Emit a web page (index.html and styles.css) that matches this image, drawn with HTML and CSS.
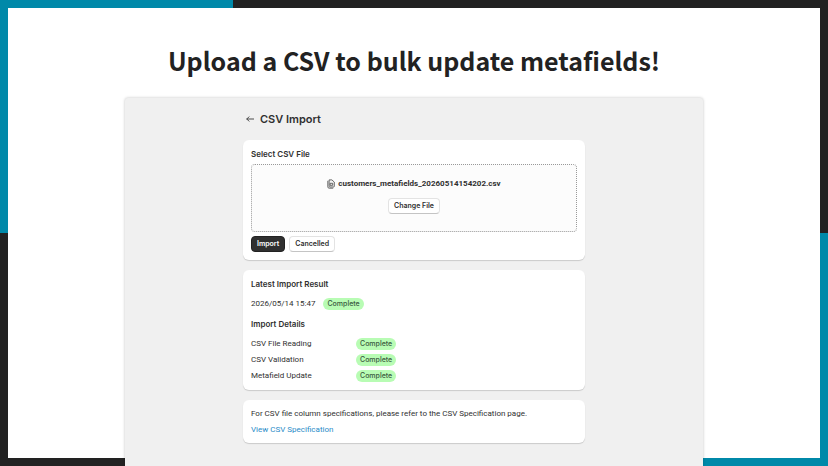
FILE: index.html
```html
<!DOCTYPE html>
<html lang="en">

<head>
    <meta charset="UTF-8">
    <meta name="viewport" content="width=device-width, initial-scale=1">
    <title>CSV Import</title>
    <link rel="stylesheet" href="styles.css">
</head>

<body>
    <div class="frame">
        <main class="sheet">
            <h1 class="headline">Upload a CSV to bulk update metafields!</h1>

            <div class="panel">
                <div class="content">
                    <header class="page-header">
                        <a href="#" class="back" aria-label="Back">
                            <svg viewBox="0 0 10 10" width="10" height="10">
                                <path d="M8.6 5H1.8M4 2.8L1.8 5 4 7.2" fill="none" stroke="#4a4a4a" stroke-width="1" stroke-linecap="round" stroke-linejoin="round" />
                            </svg>
                        </a>
                        <h2>CSV Import</h2>
                    </header>

                    <section class="card">
                        <h3>Select CSV File</h3>
                        <div class="dropzone">
                            <div class="file">
                                <svg viewBox="0 0 8 10" width="8" height="10">
                                    <path d="M2.1.9h2.8l2.4 2.2v4.2q0 .7-.7.7H2.8q-.7 0-.7-.7z" fill="#f4f4f4" stroke="#454545" stroke-width=".8" stroke-linejoin="round" />
                                    <path d="M.8 2.2v5.6q0 1.4 1.4 1.4h3.6M3.5 4.3h2.2v2H3.5z" fill="none" stroke="#454545" stroke-width=".8" stroke-linecap="round" />
                                </svg>
                                <span>customers_metafields_20260514154202.csv</span>
                            </div>
                            <button type="button" class="btn">Change File</button>
                        </div>
                        <div class="actions">
                            <button type="button" class="btn primary">Import</button>
                            <button type="button" class="btn">Cancelled</button>
                        </div>
                    </section>

                    <section class="card result">
                        <h3>Latest Import Result</h3>
                        <p class="latest">
                            <span>2026/05/14 15:47</span>
                            <span class="badge">Complete</span>
                        </p>
                        <h3>Import Details</h3>
                        <table class="details">
                            <tr>
                                <th scope="row">CSV File Reading</th>
                                <td><span class="badge">Complete</span></td>
                            </tr>
                            <tr>
                                <th scope="row">CSV Validation</th>
                                <td><span class="badge">Complete</span></td>
                            </tr>
                            <tr>
                                <th scope="row">Metafield Update</th>
                                <td><span class="badge">Complete</span></td>
                            </tr>
                        </table>
                    </section>

                    <section class="card spec">
                        <p>For CSV file column specifications, please refer to the CSV Specification page.</p>
                        <a href="#">View CSV Specification</a>
                    </section>
                </div>
            </div>
        </main>
    </div>
</body>

</html>
```
FILE: styles.css
```css
* {
    box-sizing: border-box;
}

body,
h1,
h2,
h3,
p {
    margin: 0;
}

body {
    font-family: Roboto, "Liberation Sans", sans-serif;
    font-size: 8px;
    line-height: 12px;
    color: #303030;
}

/* two teal corners on a dark border */
.frame {
    display: flex;
    min-height: 100vh;
    padding: 8px;
    background:
        linear-gradient(#0089a9, #0089a9) left top / 233px 50% no-repeat,
        linear-gradient(#0089a9, #0089a9) right bottom / 233px 50% no-repeat,
        #222;
}

.sheet {
    flex: 1;
    display: flex;
    flex-direction: column;
    align-items: center;
    padding: 32px 16px 0;
    background: #fff;
}

.headline {
    margin-bottom: 18px;
    font-family: "Noto Sans CJK JP", sans-serif;
    font-size: 25px;
    font-weight: 700;
    line-height: 40px;
    text-align: center;
    color: #222;
}

/* the panel runs over the bottom border */
.panel {
    flex: 1;
    width: 100%;
    max-width: 578px;
    margin-bottom: -8px;
    padding: 10px 16px 16px;
    border-radius: 3px 3px 0 0;
    background: #f0f0f0;
    box-shadow: 0 0 3px rgba(0, 0, 0, 0.25);
}

.content {
    display: flex;
    flex-direction: column;
    gap: 10px;
    max-width: 342px;
    margin: 0 auto;
}

.page-header {
    display: flex;
    align-items: center;
    gap: 5px;
    height: 22px;
    padding-left: 2px;
}

.page-header h2 {
    font-family: Inter, "Liberation Sans", sans-serif;
    font-size: 11px;
    font-weight: 600;
    line-height: 16px;
}

.back {
    display: flex;
}

.card {
    padding: 8px;
    border-radius: 6px;
    background: #fff;
    box-shadow: 0 1px 1px rgba(0, 0, 0, 0.16);
}

.card h3 {
    font-family: Inter, "Liberation Sans", sans-serif;
    font-size: 8px;
    font-weight: 600;
    line-height: 12px;
}

.dropzone {
    display: flex;
    flex-direction: column;
    align-items: center;
    justify-content: center;
    gap: 8px;
    min-height: 68px;
    margin: 4px 0;
    padding-bottom: 4px;
    border: 1px dotted #999;
    border-radius: 4px;
    background: #fcfcfc;
}

.file {
    display: flex;
    align-items: center;
    gap: 3px;
    font-weight: 700;
}

.btn {
    height: 16px;
    padding: 0 5px;
    border: 1px solid #e3e3e3;
    border-bottom-color: #c4c4c4;
    border-radius: 4px;
    background: #fff;
    color: #303030;
    font-family: Inter, "Liberation Sans", sans-serif;
    font-size: 7px;
    font-weight: 600;
    line-height: 12px;
    cursor: pointer;
}

.btn.primary {
    border-color: #222;
    background: #303030;
    color: #fff;
}

.actions {
    display: flex;
    gap: 4px;
}

.latest {
    display: flex;
    align-items: center;
    gap: 8px;
    margin: 8px 0;
}

.badge {
    display: inline-block;
    padding: 0 4px;
    border-radius: 6px;
    background: #b8fcb4;
    color: #3a5a40;
    font-family: Inter, "Liberation Sans", sans-serif;
    font-size: 7px;
    font-weight: 500;
    line-height: 12px;
    vertical-align: top;
}

.details {
    margin-top: 6px;
    border-spacing: 0;
}

.details th,
.details td {
    padding: 2px 0;
    font-weight: 400;
    text-align: left;
}

.details th {
    width: 105px;
}

.result {
    padding-bottom: 6px;
}

.spec {
    padding-bottom: 7px;
}

.spec p {
    margin-bottom: 4px;
}

.spec a {
    color: #2a8cc8;
    text-decoration: none;
}
```
